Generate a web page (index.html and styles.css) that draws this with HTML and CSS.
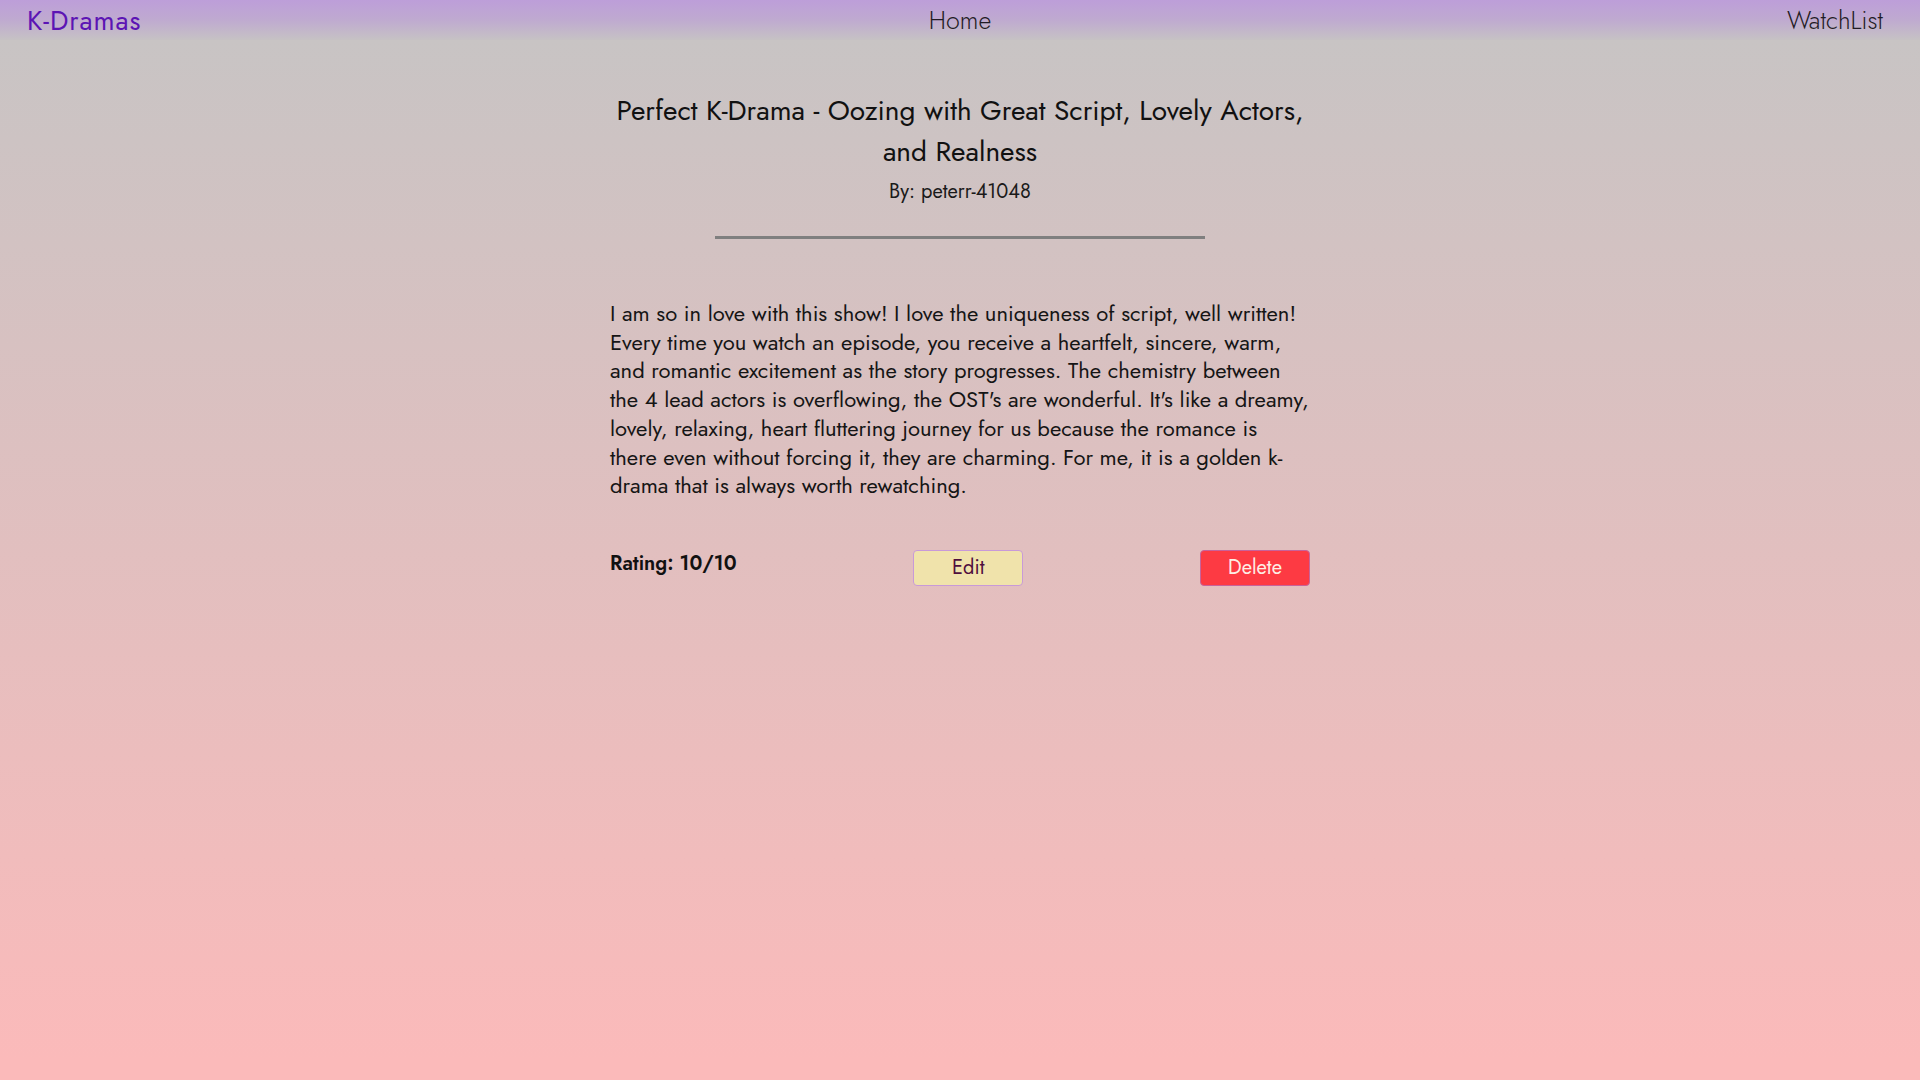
FILE: index.html
```html
<!DOCTYPE html>
<html lang="en">
<head>
<meta charset="utf-8">
<title>K-Dramas</title>
<link rel="stylesheet" href="styles.css">
</head>
<body>
<nav class="navbar">
  <a class="brand" href="#">K-Dramas</a>
  <a class="nav-link home" href="#">Home</a>
  <a class="nav-link watchlist" href="#">WatchList</a>
</nav>
<main class="review">
  <h1 class="review-title">Perfect K-Drama - Oozing with Great Script, Lovely Actors, and Realness</h1>
  <p class="review-author">By: peterr-41048</p>
  <hr class="divider">
  <p class="review-body">I am so in love with this show! I love the uniqueness of script, well written! Every time you watch an episode, you receive a heartfelt, sincere, warm, and romantic excitement as the story progresses. The chemistry between the 4 lead actors is overflowing, the OST's are wonderful. It's like a dreamy, lovely, relaxing, heart fluttering journey for us because the romance is there even without forcing it, they are charming. For me, it is a golden k-drama that is always worth rewatching.</p>
  <div class="review-footer">
    <span class="rating">Rating: 10/10</span>
    <button class="btn btn-edit">Edit</button>
    <button class="btn btn-delete">Delete</button>
  </div>
</main>
</body>
</html>
```
FILE: styles.css
```css
html, body {
  margin: 0;
  padding: 0;
  height: 100%;
}
body {
  font-family: Jost, "Liberation Sans", sans-serif;
  background: linear-gradient(180deg, #c6c3c3 0px, #c8c4c4 40px, #fbbaba 1060px, #fbbaba 100%);
  color: #111;
  min-height: 1080px;
}
.navbar {
  height: 40px;
  display: grid;
  grid-template-columns: 1fr auto 1fr;
  align-items: center;
  padding: 0 37px;
  background: linear-gradient(180deg, #bd9ed9 0%, #bfaad0 50%, #c6c2c4 100%);
}
.navbar a {
  text-decoration: none;
}
.brand {
  justify-self: start;
  margin-left: -10px;
  color: #5c14b4;
  font-size: 27px;
  font-weight: 400;
  letter-spacing: 1px;
}
.nav-link {
  color: #1f1b24;
  font-size: 25px;
  font-weight: 300;
}
.nav-link.home {
  justify-self: center;
}
.nav-link.watchlist {
  justify-self: end;
}
.review {
  width: 700px;
  margin: 0 auto;
  padding-top: 50px;
  text-align: center;
}
.review-title {
  margin: 0;
  font-size: 28px;
  font-weight: 400;
  line-height: 41px;
  color: #111;
}
.review-author {
  margin: 6px 0 0;
  font-size: 20px;
  line-height: 28px;
  color: #1a1a1a;
}
.divider {
  width: 490px;
  height: 3px;
  margin: 30px auto 0;
  border: 0;
  background: #7f7f7f;
}
.review-body {
  margin: 60px 0 0;
  text-align: left;
  font-size: 22px;
  line-height: 28.7px;
  color: #151515;
}
.review-footer {
  margin-top: 50px;
  display: flex;
  justify-content: space-between;
  align-items: flex-start;
}
.rating {
  font-size: 20px;
  font-weight: 600;
  line-height: 28px;
  color: #111;
}
.btn {
  width: 110px;
  height: 36px;
  border-radius: 4px;
  font-family: Jost, "Liberation Sans", sans-serif;
  font-size: 20px;
  cursor: pointer;
  padding: 0;
}
.btn-edit {
  background: #f0e3ab;
  border: 1px solid #c89ad8;
  color: #4f0f3e;
}
.btn-delete {
  background: #fd3a43;
  border: 1px solid #c8629a;
  color: #fdeee6;
}
```
